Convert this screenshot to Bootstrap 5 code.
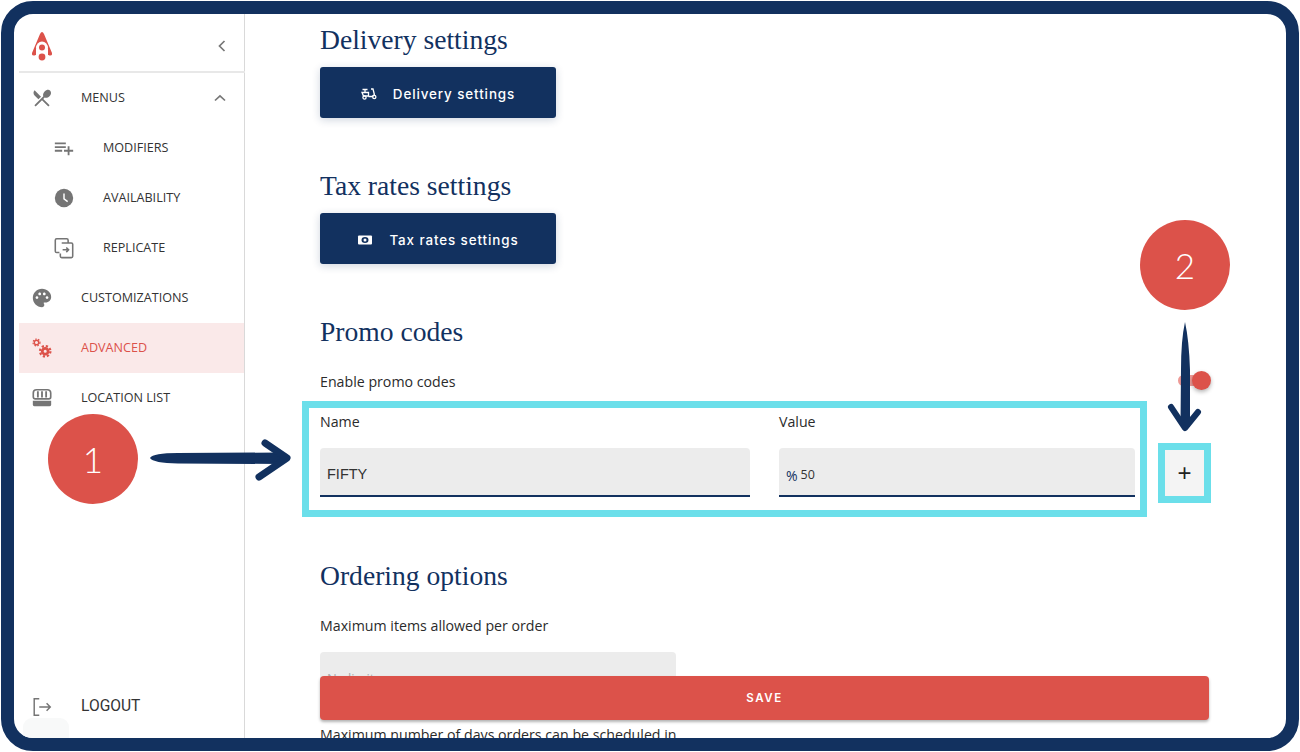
<!DOCTYPE html>
<html lang="en"><head><meta charset="utf-8"><title>Settings</title>
<link href="https://cdn.jsdelivr.net/npm/bootstrap@5.3.0/dist/css/bootstrap.min.css" rel="stylesheet">
<style>
html,body{margin:0;height:752px;overflow:hidden;background:#fff}
.stage{position:relative;width:1300px;height:752px;font-family:"Open Sans","Noto Sans",sans-serif;color:#2b2b2b}
.frame{position:absolute;inset:1px 1px 1px 1px;border:13px solid #12315f;border-radius:32px;background:#fff;overflow:hidden;display:flex}
.side{flex:0 0 226px;margin-left:5px;border-right:1px solid #d9d9d9;display:flex;flex-direction:column;position:relative;width:226px}
.side-head{height:59px;border-bottom:2px solid #e8e8e8;display:flex;align-items:center;justify-content:space-between;padding:7px 18px 0 13px;margin-right:-1px}
.side-item{height:50px;flex:none;display:flex;align-items:center;padding:0 18px 0 12px;font-size:12.6px;color:#333;text-decoration:none}
.side-item svg.ic{width:22px;height:22px;fill:#757575;flex:none}
.side-item .lbl{margin-left:28px;flex:1}
.side-item.sub{padding-left:34px}
.side-item.sub .lbl{margin-left:28px}
.side-item.on{background:#fae9e9;color:#dc524a}
.side-item.on svg.ic{fill:#dc524a}
.side-item.out{font-family:Roboto,sans-serif;font-size:15.6px;height:38px;margin-top:auto;margin-bottom:12px}
.ghost{position:absolute;left:4px;bottom:0;width:46px;height:20px;border-radius:9px 9px 0 0;background:#f8f9f9}
.main{flex:1;position:relative;overflow:hidden;min-width:0}
.pane{padding:11px 77px 0 75px}
.ttl{font-family:"Liberation Serif",serif;font-size:27.6px;line-height:30px;color:#12315f;margin:0;font-weight:400}
.navy-btn{width:236px;height:51px;background:#12315f;color:#fff;border:0;border-radius:3px;display:flex;align-items:center;justify-content:center;gap:16px;font-family:Inter,sans-serif;font-weight:500;font-size:13.4px;letter-spacing:.9px;box-shadow:0 2px 8px rgba(18,49,95,.2);margin-top:12px;padding:3px 0 0}
.navy-btn:hover,.navy-btn:focus{background:#12315f;color:#fff}
.navy-btn svg{width:16px;height:16px;fill:none;stroke:#fff}
.gap-sec{margin-top:53px}
.copy{font-size:14.2px;line-height:24px;color:#2b2b2b}
.switch{width:30px;height:11px;background:#ee9a96;border-radius:6px;position:relative;margin-right:1px;margin-top:-4px}
.switch::after{content:"";position:absolute;right:-3px;top:-4px;width:19px;height:19px;border-radius:50%;background:#dc524a;box-shadow:0 2px 4px rgba(0,0,0,.3)}
.promo-wrap{margin-top:7px;margin-left:-18px;margin-right:-2px;display:flex;align-items:flex-start;gap:11px}
.cy{border:7px solid #6bdfea}
.promo-box{width:845px;height:116px;padding:2px 5px 0 11px;display:flex;gap:29px;flex:none}
.fld-a{width:430px}.fld-b{flex:1}
.fld-lbl{display:block;font-size:14.2px;line-height:24px;margin-bottom:14px;color:#2b2b2b}
.fake-input{background:#ececec;border:0;border-bottom:2px solid #12315f;border-radius:4px 4px 0 0;height:49px;padding:5px 7px 0;width:100%;font-size:14.5px;color:#333;font-family:"Liberation Sans",sans-serif;box-shadow:none}
.fake-input:focus{background:#ececec;border-color:#12315f;box-shadow:none}
.pre-input{display:flex;align-items:center;background:#ececec;border-bottom:2px solid #12315f;border-radius:4px 4px 0 0;height:49px;padding:7px 7px 0;font-size:12.5px;gap:3px;color:#333}
.pre-input i{font-style:normal;color:#12315f;font-size:14px}
.plus-box{width:53px;height:60px;margin-top:42px;background:#f4f4f4;display:flex;align-items:center;justify-content:center;padding:0;border-radius:0;font-size:24px;line-height:1;color:#222;font-family:"Liberation Sans",sans-serif}
.plus-box:hover{background:#f4f4f4;border-color:#6bdfea}
.limit{width:356px;height:48px;background:#ececec;border-radius:4px 4px 0 0;margin-top:14px;padding:17px 7px 0;font-size:13px;color:#aaa}
.savebar{position:absolute;left:75px;top:662px;width:889px;height:44px;background:#dc524a;color:#fff;border:0;border-radius:4px;font-family:Inter,sans-serif;font-weight:600;font-size:11.5px;letter-spacing:1.6px;padding:2px 0 0;box-shadow:0 2px 3px rgba(0,0,0,.3)}
.savebar:hover{background:#dc524a;color:#fff}
.dot{position:absolute;width:90px;height:90px;border-radius:50%;background:#dc524a;color:#fff;display:flex;align-items:center;justify-content:center;font-family:Lato,sans-serif;font-weight:300;font-size:35px}
.dot.d1{left:48px;top:414px}
.dot.d2{left:1140px;top:220px}
.arrows{position:absolute;left:0;top:0;pointer-events:none}
</style></head>
<body>
<div class="stage">
 <div class="frame">
  <nav class="side">
   <div class="side-head">
    <svg width="20" height="29" viewBox="0 0 20 29"><path d="M10 0 Q11 0 12 2 L20 21 Q20.5 24 17.5 23.5 L14 22 H6 L2.5 23.5 Q-.5 24 0 21 L8 2 Q9 0 10 0Z" fill="#dc524a"/><ellipse cx="10" cy="16" rx="6" ry="6.5" fill="#fff"/><rect x="4" y="17" width="12" height="12" fill="#fff"/><circle cx="10" cy="15.5" r="3" fill="#dc524a"/><circle cx="10" cy="25" r="3.4" fill="#dc524a"/></svg>
    <svg width="10" height="14" viewBox="0 0 10 14"><path d="M7.5 2 2.5 7l5 5" fill="none" stroke="#777" stroke-width="1.7"/></svg>
   </div>
   <a class="side-item" href="#"><svg class="ic" viewBox="0 0 24 24"><path d="M8.1 13.34l2.83-2.83L3.91 3.5c-1.56 1.56-1.56 4.09 0 5.66l4.19 4.18zm6.78-1.81c1.53.71 3.68.21 5.27-1.38 1.91-1.91 2.28-4.65.81-6.12-1.46-1.46-4.2-1.1-6.12.81-1.59 1.59-2.09 3.74-1.38 5.27L3.7 19.87l1.41 1.41L12 14.41l6.88 6.88 1.41-1.41L13.41 13l1.47-1.47z"/></svg><span class="lbl">MENUS</span><svg width="12" height="8" viewBox="0 0 12 8"><path d="M1 6.5 6 1.8l5 4.7" fill="none" stroke="#777" stroke-width="1.7"/></svg></a>
   <a class="side-item sub" href="#"><svg class="ic" viewBox="0 0 24 24"><path d="M14 10H2v2h12v-2zm0-4H2v2h12V6zm4 8v-4h-2v4h-4v2h4v4h2v-4h4v-2h-4zM2 16h8v-2H2v2z"/></svg><span class="lbl">MODIFIERS</span></a>
   <a class="side-item sub" href="#"><svg class="ic" viewBox="0 0 24 24"><path d="M12 2a10 10 0 1 0 0 20 10 10 0 0 0 0-20z"/><path d="M12 7v6l4 3" fill="none" stroke="#fff" stroke-width="1.6"/></svg><span class="lbl">AVAILABILITY</span></a>
   <a class="side-item sub" href="#"><svg class="ic" viewBox="0 0 24 24"><path d="M7 17H4a1.5 1.5 0 0 1-1.5-1.5V3.500A1.500 1.500 0 0 1 4 2h11a1.500 1.500 0 0 1 1.500 1.500V6M9.500 6.500H20a1.500 1.500 0 0 1 1.500 1.500v13a1.500 1.500 0 0 1-1.500 1.500H9.500A1.500 1.500 0 0 1 8 21v-3M10.500 14H17m-2.500-2.500L17 14l-2.500 2.500" fill="none" stroke="#757575" stroke-width="1.7"/></svg><span class="lbl">REPLICATE</span></a>
   <a class="side-item" href="#"><svg class="ic" viewBox="0 0 24 24"><path d="M12 2C6.49 2 2 6.49 2 12s4.49 10 10 10c1.38 0 2.5-1.12 2.5-2.5 0-.61-.23-1.2-.64-1.67-.08-.1-.13-.21-.13-.33 0-.28.22-.5.5-.5H16c3.31 0 6-2.69 6-6 0-4.96-4.49-9-10-9zm5.500 11c-.83 0-1.5-.67-1.5-1.5s.67-1.5 1.5-1.5 1.5.67 1.5 1.5-.67 1.5-1.5 1.5zm-3-4c-.83 0-1.5-.67-1.5-1.5S13.67 6 14.500 6s1.500.67 1.500 1.500S15.330 9 14.500 9zM5 11.500c0-.83.67-1.500 1.500-1.500s1.500.67 1.500 1.500S7.330 13 6.500 13 5 12.330 5 11.500zm6-4c0 .83-.67 1.500-1.500 1.500S8 8.330 8 7.500 8.670 6 9.500 6s1.500.67 1.500 1.500z"/></svg><span class="lbl">CUSTOMIZATIONS</span></a>
   <a class="side-item on" href="#"><svg class="ic" viewBox="0 0 24 24"><g fill="none" stroke="#dc524a"><circle cx="6" cy="6" r="2.400" stroke-width="1.500"/><circle cx="6" cy="6" r="3.800" stroke-width="1.300" stroke-dasharray="1.700 1.500"/><circle cx="15.500" cy="15.500" r="3.200" stroke-width="3"/><circle cx="15.500" cy="15.500" r="5.700" stroke-width="2.400" stroke-dasharray="2.400 2.070"/></g></svg><span class="lbl">ADVANCED</span></a>
   <a class="side-item" href="#"><svg class="ic" viewBox="0 0 24 24"><path d="M6 3h12a3.500 3.500 0 0 1 3.500 3.500V11a2 2 0 0 1-2 2h-15a2 2 0 0 1-2-2V6.500A3.500 3.500 0 0 1 6 3z" fill="none" stroke="#757575" stroke-width="1.800"/><path d="M7.500 4.500v7M12 4.500v7M16.500 4.500v7" stroke="#757575" stroke-width="2"/><path d="M2 15h20v4a2 2 0 0 1-2 2H4a2 2 0 0 1-2-2z"/></svg><span class="lbl">LOCATION LIST</span></a>
   <a class="side-item out" href="#"><svg class="ic" viewBox="0 0 24 24"><path d="M9 3H3.500v18H9M9 12h12m-4-4 4 4-4 4" fill="none" stroke="#757575" stroke-width="1.600"/></svg><span class="lbl">LOGOUT</span></a>
   <div class="ghost"></div>
  </nav>
  <main class="main">
   <div class="pane">
    <h4 class="ttl">Delivery settings</h4>
    <button class="btn navy-btn" type="button"><svg viewBox="0 0 16 16" stroke-width="1.300"><path d="M1.500 3.500h5M4 3.500V6M1 6.500h6.500v3.500H2.500zM10 3h2l1.500 6M7.500 10.500h3.500l2-1.500"/><circle cx="3.500" cy="11.500" r="1.600"/><circle cx="13.300" cy="11" r="1.600"/></svg><span>Delivery settings</span></button>
    <h4 class="ttl gap-sec">Tax rates settings</h4>
    <button class="btn navy-btn" type="button"><svg viewBox="0 0 16 16"><rect x="1" y="3.500" width="14" height="9" rx="1" fill="#fff" stroke="none"/><ellipse cx="8" cy="8" rx="3.500" ry="3" fill="#12315f" stroke="none"/><circle cx="8" cy="8" r="1.500" fill="#fff" stroke="none"/></svg><span>Tax rates settings</span></button>
    <h4 class="ttl gap-sec">Promo codes</h4>
    <div class="d-flex justify-content-between align-items-center copy" style="margin-top:23px"><span>Enable promo codes</span><span class="switch"></span></div>
    <div class="promo-wrap">
     <div class="cy promo-box">
      <div class="fld-a"><label class="fld-lbl">Name</label><input class="form-control fake-input" value="FIFTY"></div>
      <div class="fld-b"><label class="fld-lbl">Value</label><div class="pre-input"><i>%</i><span>50</span></div></div>
     </div>
     <button class="btn cy plus-box" type="button">+</button>
    </div>
    <h4 class="ttl" style="margin-top:44px">Ordering options</h4>
    <div class="copy" style="margin-top:23px">Maximum items allowed per order</div>
    <div class="limit">No limit</div>
    <div class="copy" style="margin-top:23px">Maximum number of days orders can be scheduled in</div>
   </div>
   <button class="btn savebar" type="button">SAVE</button>
  </main>
 </div>
 <div class="dot d1">1</div>
 <div class="dot d2">2</div>
 <svg class="arrows" width="1300" height="752" viewBox="0 0 1300 752">
  <path d="M150 458 Q153 453 178 453 L280 452.500 Q286 456 286 460 L280 464 L178 463.500 Q153 463 150 458Z" fill="#12315f"/>
  <path d="M265 443 L287 458 L259 477" fill="none" stroke="#12315f" stroke-width="7" stroke-linecap="round" stroke-linejoin="round"/>
  <path d="M1185 322 Q1181 340 1181 370 L1180.500 425 L1190 425 L1190 370 Q1189 340 1185 322Z" fill="#12315f"/>
  <path d="M1171 407 L1185 428 L1198 412" fill="none" stroke="#12315f" stroke-width="6" stroke-linecap="round" stroke-linejoin="round"/>
 </svg>
</div>
<script src="https://cdn.jsdelivr.net/npm/bootstrap@5.3.0/dist/js/bootstrap.bundle.min.js"></script>
</body></html>
